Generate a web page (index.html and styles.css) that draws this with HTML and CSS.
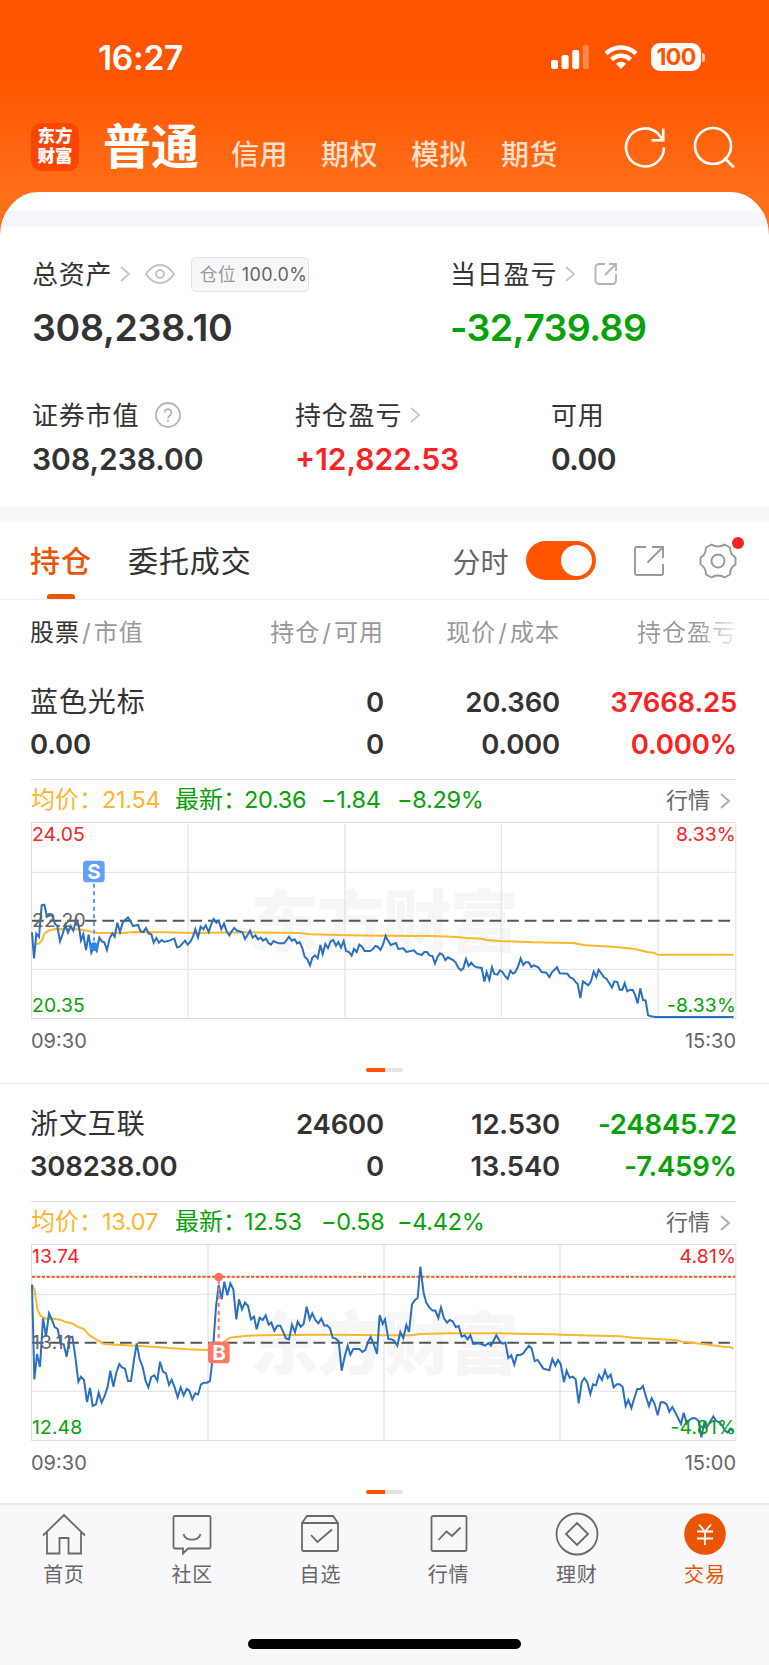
FILE: index.html
```html
<!DOCTYPE html>
<html lang="zh-CN">
<head>
    <meta charset="UTF-8">
    <meta name="viewport" content="width=device-width, initial-scale=1.0">
    <title>东方财富</title>
    <link rel="stylesheet" href="styles.css">
</head>
<body>
    <header>
        <div class="status">
            <span class="clock">16:27</span>
            <svg class="signal" width="40" height="26" viewBox="0 0 40 26">
                <rect x="0" y="16" width="7" height="9" rx="2" fill="#fff"/>
                <rect x="10.6" y="11" width="7" height="14" rx="2" fill="#fff"/>
                <rect x="21.2" y="6" width="7" height="19" rx="2" fill="#fff"/>
                <rect x="31.8" y="1" width="6" height="24" rx="2" fill="#fff" opacity=".3"/>
            </svg>
            <svg class="wifi" width="34" height="26" viewBox="0 0 34 26" fill="none" stroke="#fff" stroke-width="4.6">
                <path d="M2 9.6a21.5 21.5 0 0 1 30 0"/>
                <path d="M7.6 15.6a13.5 13.5 0 0 1 18.8 0"/>
                <path d="M17 25l-5-5.200a7 7 0 0 1 10 0z" fill="#fff" stroke="none"/>
            </svg>
            <span class="battery">100</span>
            <span class="battery-tip"></span>
        </div>
        <nav class="top-nav">
            <div class="logo"><span>东方</span><span>财富</span></div>
            <span class="nav-on">普通</span>
            <span class="nav-item">信用</span>
            <span class="nav-item">期权</span>
            <span class="nav-item">模拟</span>
            <span class="nav-item">期货</span>
            <svg class="refresh" width="42" height="42" viewBox="0 0 42 42" fill="none" stroke="#fff" stroke-width="2.6">
                <path d="M40 21.5A19 19 0 1 1 34 7.600L39 14"/>
                <path d="M39.2 2.500V14.300H27.500"/>
            </svg>
            <svg class="search" width="42" height="42" viewBox="0 0 42 42" fill="none" stroke="#fff" stroke-width="2.6" stroke-linecap="round">
                <circle cx="20" cy="20" r="18"/>
                <path d="M32 32.500L40 40.500"/>
            </svg>
        </nav>
    </header>

    <main>
        <div class="band band-top"></div>

        <section class="assets">
            <div class="asset-row">
                <div class="asset wide">
                    <div class="label"><span>总资产</span>
                        <svg class="arrow" width="12" height="18" viewBox="0 0 12 18"><path d="M2 2l8 7-8 7"/></svg>
                        <svg class="eye" width="30" height="20" viewBox="0 0 30 20" fill="none" stroke="#c4c4c4" stroke-width="2">
                            <path d="M1 10C5 4 10 1 15 1s10 3 14 9c-4 6-9 9-14 9S5 16 1 10z"/>
                            <circle cx="15" cy="10" r="4"/>
                        </svg>
                        <div class="chip">仓位 <b>100.0%</b></div>
                    </div>
                    <div class="value big">308,238.10</div>
                </div>
                <div class="asset">
                    <div class="label"><span>当日盈亏</span>
                        <svg class="arrow" width="12" height="18" viewBox="0 0 12 18"><path d="M2 2l8 7-8 7"/></svg>
                        <svg class="share" width="24" height="24" viewBox="0 0 24 24" fill="none" stroke="#b5b5b5" stroke-width="1.9">
                            <path d="M11 2H5a3.500 3.500 0 0 0-3.500 3.500v13A3.500 3.500 0 0 0 5 22h13.500a3.500 3.500 0 0 0 3.500-3.500V12"/>
                            <path d="M15 2h7v7M22 2L11 13"/>
                        </svg>
                    </div>
                    <div class="value big tight green">-32,739.89</div>
                </div>
            </div>
            <div class="asset-row second">
                <div class="asset c1">
                    <div class="label"><span>证券市值</span>
                        <svg class="help" width="26" height="26" viewBox="0 0 26 26" fill="none" stroke="#b5b5b5" stroke-width="1.8">
                            <circle cx="13" cy="13" r="12"/>
                            <path d="M9.600 10.500a3.400 3.400 0 1 1 5.200 2.900c-1.200.8-1.800 1.400-1.800 3M13 17.800v2"/>
                        </svg>
                    </div>
                    <div class="value">308,238.00</div>
                </div>
                <div class="asset c2">
                    <div class="label"><span>持仓盈亏</span>
                        <svg class="arrow" width="12" height="18" viewBox="0 0 12 18"><path d="M2 2l8 7-8 7"/></svg>
                    </div>
                    <div class="value red">+12,822.53</div>
                </div>
                <div class="asset">
                    <div class="label"><span>可用</span></div>
                    <div class="value tight">0.00</div>
                </div>
            </div>
        </section>

        <div class="band"></div>

        <div class="tabs">
            <span class="tab tab-on">持仓</span>
            <span class="tab">委托成交</span>
            <span class="fenshi">分时</span>
            <span class="switch"></span>
            <svg class="export" width="32" height="32" viewBox="0 0 32 32" fill="none" stroke="#999" stroke-width="1.9">
                <path d="M13 2H3.500A1.500 1.500 0 0 0 2 3.500v25A1.500 1.500 0 0 0 3.500 30h25a1.500 1.500 0 0 0 1.500-1.500V19"/>
                <path d="M19 2h11v11M30 2L14.500 17.500"/>
            </svg>
            <div class="gear">
                <svg width="38" height="38" viewBox="0 0 38 38" fill="none" stroke="#999" stroke-width="1.9" stroke-linejoin="round">
                    <path d="M12.500 2.500q2.500 2 6.500 2t6.500-2l5.500 3q.2 4 1.500 6.200t4 3.800v7q-2.700 1.500-4 3.800t-1.500 6.200l-5.500 3q-2.500-2-6.500-2t-6.500 2l-5.500-3q-.2-4-1.500-6.200t-4-3.800v-7q2.700-1.500 4-3.800t1.500-6.200z"/>
                    <circle cx="19" cy="19" r="6.500"/>
                </svg>
                <i></i>
            </div>
        </div>

        <div class="cols thead">
            <span><em>股票</em><s>/</s>市值</span>
            <span>持仓<s>/</s>可用</span>
            <span>现价<s>/</s>成本</span>
            <span class="fade">持仓盈亏</span>
        </div>

        <section class="stock">
            <div class="cols nums">
                <span class="name">蓝色光标</span><span>0</span><span>20.360</span><span class="red">37668.25</span>
                <span>0.00</span><span>0</span><span>0.000</span><span class="red">0.000%</span>
            </div>
            <div class="info">
                <span class="orange">均价：</span><b class="orange">21.54</b>
                <span class="green">最新：</span><b class="green">20.36</b>
                <b class="green">−1.84</b>
                <b class="green">−8.29%</b>
                <span class="more">行情</span>
                <svg class="arrow dark" width="12" height="18" viewBox="0 0 12 18"><path d="M2 2l8 7-8 7"/></svg>
            </div>
            <svg class="chart" width="706" height="199" viewBox="93 153 2118 597">
                <text class="mark" x="750" y="531" textLength="805">东方财富</text>
                <path class="grid" d="M95 307H2208M95 598H2208M564 162V742M1035 162V742M1504 162V742M1974 162V742"/>
                <rect class="frame" x="94.500" y="157.500" width="2113" height="588"/>
                <path class="base" d="M96 452H2206"/>
                <polyline class="avg" points="108,522 118,520 126,510 134,490 145,482 165,477 200,478 235,478 260,482 290,488 370,489 400,486 500,487 580,489 720,487 900,489 930,493 1040,496 1155,497 1290,498 1360,500 1400,504 1445,506 1460,510 1500,513 1600,517 1720,519 1755,526 1840,530 1905,537 1945,547 1962,548 1972,554 2201,554"/>
                <polyline class="price" points="96,487 102,565 109,491 117,501 125,406 133,404 141,440 149,436 157,436 165,462 172,468 180,514 188,492 196,464 204,488 212,468 220,482 229,448 236,465 243,511 250,493 258,540 266,494 274,548 282,530 290,543 298,503 306,515 313,517 321,540 329,505 337,490 344,500 352,458 360,486 368,458 376,450 384,442 391,453 399,468 414,465 422,484 430,486 438,474 446,490 454,493 461,518 469,504 477,518 485,510 493,516 508,512 523,506 531,532 539,530 555,512 563,524 571,515 579,500 586,478 594,502 602,470 610,478 617,466 626,486 634,462 641,447 649,458 656,452 664,477 672,461 680,484 688,496 695,484 703,474 711,482 727,486 735,507 743,494 750,482 758,503 766,496 774,508 782,503 789,512 798,506 806,520 813,524 821,513 836,520 852,520 860,510 867,500 875,512 884,508 891,520 899,516 907,534 914,560 922,568 930,586 937,563 945,556 953,565 961,525 968,552 976,522 984,534 992,514 1000,510 1008,527 1015,516 1023,533 1031,513 1038,543 1047,546 1055,557 1062,537 1070,546 1078,524 1086,530 1094,543 1110,543 1118,538 1126,528 1133,530 1141,540 1149,524 1157,498 1160,505 1172,525 1188,519 1195,537 1210,535 1219,546 1242,541 1250,550 1265,555 1273,546 1281,546 1289,557 1297,558 1305,580 1313,560 1320,550 1328,554 1336,570 1344,562 1360,571 1367,578 1375,594 1383,601 1390,595 1398,567 1406,588 1414,578 1422,588 1430,592 1445,594 1453,635 1460,606 1468,630 1476,592 1483,612 1492,614 1500,601 1507,606 1515,618 1523,627 1531,602 1539,611 1546,606 1554,590 1562,565 1570,585 1577,577 1586,577 1594,591 1601,586 1615,592 1625,606 1639,608 1648,621 1655,608 1671,592 1679,610 1702,611 1710,622 1718,625 1726,635 1733,642 1741,684 1749,634 1765,646 1773,634 1781,605 1789,621 1796,599 1812,622 1820,627 1828,640 1836,653 1843,634 1852,636 1859,659 1867,659 1874,640 1882,664 1890,659 1898,660 1905,674 1913,700 1921,655 1929,690 1937,691 1944,735 1952,739 1967,741 2201,741"/>
                <path class="sell-line" d="M282 341V520"/>
                <circle cx="282" cy="530" r="13" fill="#2f86f6"/>
                <rect x="249" y="272" width="65" height="65" rx="11" fill="#5f9fff"/>
                <text class="flag" x="282" y="327">S</text>
                <text class="axis up" x="96" y="212">24.05</text>
                <text class="axis mid" x="96" y="471">22.20</text>
                <text class="axis down" x="96" y="726">20.35</text>
                <text class="axis up end" x="2208" y="212">8.33%</text>
                <text class="axis down end" x="2208" y="726">-8.33%</text>
            </svg>
            <div class="times"><span>09:30</span><span>15:30</span></div>
            <div class="pager"></div>
        </section>

        <section class="stock">
            <div class="cols nums">
                <span class="name">浙文互联</span><span>24600</span><span>12.530</span><span class="green">-24845.72</span>
                <span>308238.00</span><span>0</span><span>13.540</span><span class="green">-7.459%</span>
            </div>
            <div class="info">
                <span class="orange">均价：</span><b class="orange">13.07</b>
                <span class="green">最新：</span><b class="green">12.53</b>
                <b class="green">−0.58</b>
                <b class="green">−4.42%</b>
                <span class="more">行情</span>
                <svg class="arrow dark" width="12" height="18" viewBox="0 0 12 18"><path d="M2 2l8 7-8 7"/></svg>
            </div>
            <svg class="chart" width="706" height="199" viewBox="93 159 2118 597">
                <text class="mark" x="750" y="537" textLength="805">东方财富</text>
                <path class="grid" d="M95 313H2208M95 604H2208M624 168V748M1152 168V748M1680 168V748"/>
                <rect class="frame" x="94.500" y="163.500" width="2113" height="588"/>
                <path class="base" d="M96 458H2206"/>
                <path class="cost" d="M96 260H2206"/>
                <polyline class="avg" points="96,284 104,300 112,358 122,378 137,386 160,386 180,389 200,397 217,400 235,411 252,417 268,436 290,449 310,461 350,464 420,468 510,474 560,478 620,480 640,480 665,460 690,443 740,437 830,435 1000,434 1155,436 1235,436 1260,432 1350,430 1500,430 1650,433 1735,436 1860,439 1900,443 2025,450 2050,456 2110,462 2170,470 2190,471 2201,476"/>
                <polyline class="price" points="96,284 103,568 111,492 120,530 129,385 138,440 147,370 156,390 164,411 173,417 182,461 191,463 200,500 209,442 217,440 226,500 235,575 243,560 252,570 261,636 270,594 278,648 288,643 296,608 305,638 314,618 323,590 331,542 340,590 349,548 358,522 366,532 375,536 384,573 393,573 402,510 410,460 419,508 428,531 437,573 445,592 454,561 463,556 472,572 480,515 489,545 498,550 507,585 515,569 524,592 533,622 542,592 551,616 560,597 568,602 577,628 586,610 594,614 603,583 612,578 621,578 630,573 636,520 641,450 648,350 656,285 665,328 673,275 682,316 691,280 700,298 709,388 717,328 726,358 735,338 744,348 753,388 762,380 770,418 779,383 788,390 797,376 806,404 814,398 823,422 832,407 841,407 850,427 858,445 867,448 876,404 885,427 893,395 902,410 911,402 920,350 929,388 937,370 946,390 955,400 964,386 973,407 981,406 990,415 998,443 1007,446 1016,454 1025,542 1034,500 1043,467 1051,494 1060,477 1078,477 1087,486 1096,480 1104,456 1112,441 1121,462 1131,492 1139,375 1148,402 1155,388 1165,447 1175,448 1183,453 1192,467 1201,426 1210,444 1219,405 1227,426 1236,343 1245,330 1253,324 1261,230 1271,310 1279,338 1288,352 1297,361 1306,362 1315,384 1323,352 1332,385 1341,398 1349,390 1358,394 1367,411 1376,408 1385,440 1394,436 1403,448 1411,436 1420,462 1438,460 1455,467 1465,459 1473,467 1489,436 1499,453 1508,461 1516,458 1525,504 1534,496 1543,524 1551,495 1560,495 1569,491 1587,467 1595,476 1604,513 1613,510 1630,536 1648,541 1657,507 1666,527 1674,510 1682,522 1692,576 1700,542 1709,563 1718,560 1727,568 1736,640 1745,577 1753,564 1762,577 1771,612 1779,583 1788,586 1797,555 1806,570 1815,541 1823,564 1832,554 1841,592 1850,583 1859,583 1868,591 1877,648 1885,630 1894,654 1903,624 1912,597 1921,597 1929,588 1938,620 1947,648 1955,624 1964,642 1973,676 1982,637 1991,637 2000,643 2008,665 2017,651 2026,668 2043,702 2051,668 2060,700 2069,689 2078,684 2087,685 2096,694 2104,742 2113,698 2121,711 2140,679 2149,693 2158,697 2166,706 2175,722 2183,728 2191,716 2201,726"/>
                <path class="buy-line" d="M656 270V455"/>
                <circle cx="656" cy="261" r="13" fill="#ff6f5e"/>
                <rect x="624" y="455" width="65" height="65" rx="11" fill="#ff7867"/>
                <text class="flag" x="657" y="510">B</text>
                <text class="axis up" x="96" y="218">13.74</text>
                <text class="axis mid" x="96" y="477">13.11</text>
                <text class="axis down" x="96" y="732">12.48</text>
                <text class="axis up end" x="2208" y="218">4.81%</text>
                <text class="axis down end" x="2208" y="732">-4.81%</text>
            </svg>
            <div class="times"><span>09:30</span><span>15:00</span></div>
            <div class="pager"></div>
        </section>
    </main>

    <footer>
        <div class="tabbar">
            <div class="item">
                <svg width="44" height="44" viewBox="0 0 44 44"><path d="M1 23.500L22 3l21 20.500M5 20v21.500h12.500V26h9v15.500H39V20"/></svg>
                首页
            </div>
            <div class="item">
                <svg width="44" height="44" viewBox="0 0 44 44"><path d="M5 4h34a1.500 1.500 0 0 1 1.500 1.500V35a1.500 1.500 0 0 1-1.500 1.500H18L13 41.500v-5H5A1.500 1.500 0 0 1 3.500 35V5.500A1.500 1.500 0 0 1 5 4z"/><path d="M13.500 22c2 7.500 15 7.500 17 0"/></svg>
                社区
            </div>
            <div class="item">
                <svg width="44" height="44" viewBox="0 0 44 44"><path d="M9 4h26l5 7v26.500a1.500 1.500 0 0 1-1.500 1.500h-33A1.500 1.500 0 0 1 4 37.500V11zM4 11h36M13 23l6.500 7L34 17.500"/></svg>
                自选
            </div>
            <div class="item">
                <svg width="44" height="44" viewBox="0 0 44 44"><path d="M6 4h32a1.500 1.500 0 0 1 1.500 1.500v32A1.500 1.500 0 0 1 38 39H6a1.500 1.500 0 0 1-1.500-1.500v-32A1.500 1.500 0 0 1 6 4z"/><path d="M11.500 28l8-8.500 5.500 4.500 8.500-8.500"/></svg>
                行情
            </div>
            <div class="item">
                <svg width="44" height="44" viewBox="0 0 44 44"><circle cx="22" cy="22" r="20.500"/><path d="M22 11l11 11-11 11-11-11z"/></svg>
                理财
            </div>
            <div class="item item-on">
                <svg width="44" height="44" viewBox="0 0 44 44"><circle class="dot" cx="22" cy="22" r="20.800"/><path class="yen" d="M16 12.500l6 7 6-7M22 19.500V33M14 19.500h16M14 26.500h16"/></svg>
                交易
            </div>
        </div>
        <div class="home-bar"></div>
    </footer>
</body>
</html>
```
FILE: styles.css
```css
*{
    margin: 0;
    padding: 0;
    box-sizing: border-box;
}
body{
    height: 1665px;
    overflow: hidden;
    display: flex;
    flex-direction: column;
    background: linear-gradient(#ff5500 0, #ff5500 75px, #ff6e19 192px, #ff6e19 260px);
    font-family: Inter, "Noto Sans CJK SC", sans-serif;
    color: #333;
}
svg{
    display: block;
    flex: none;
}
b{
    font-weight: normal;
}

/* header */
header{
    height: 192px;
    flex: none;
    color: #fff;
}
.status{
    height: 114px;
    padding-left: 98px;
    display: flex;
    align-items: center;
}
.clock{
    width: 453px;
    font-size: 33.5px;
    font-weight: 600;
    letter-spacing: -.3px;
    padding-top: 1px;
}
.wifi{
    margin-left: 13px;
}
.battery{
    width: 50px;
    height: 28px;
    margin-left: 13px;
    border-radius: 9px;
    background: #fff;
    color: #ff5500;
    font-size: 23px;
    font-weight: 700;
    letter-spacing: -.6px;
    line-height: 28px;
    text-align: center;
}
.battery-tip{
    width: 3px;
    height: 9px;
    margin-left: 1px;
    border-radius: 0 3px 3px 0;
    background: #ffc4a4;
}
.top-nav{
    height: 78px;
    padding-left: 31px;
    display: flex;
}
.logo{
    width: 48px;
    height: 48px;
    margin-top: 9px;
    padding-top: 3px;
    border-radius: 10px;
    background: #ff4400;
    font-size: 17.5px;
    font-weight: 900;
    line-height: 20px;
    display: flex;
    flex-direction: column;
    align-items: center;
}
.nav-on{
    width: 127px;
    margin-left: 24px;
    font-size: 48px;
    font-weight: 700;
    line-height: 65px;
}
.nav-item{
    width: 90px;
    margin-top: 16px;
    padding-left: 1px;
    font-size: 28px;
    font-weight: 500;
    letter-spacing: .6px;
    line-height: 50px;
    color: #ffe0cc;
}
.refresh{
    margin: 12px 0 0 34px;
}
.search{
    margin: 12px 0 0 27px;
}

/* white sheet */
main{
    height: 1311px;
    flex: none;
    padding-top: 19px;
    border-radius: 38px 38px 0 0 / 44px 44px 0 0;
    background: #fff;
    overflow: hidden;
}
.band{
    height: 16px;
    background: #f6f7fa;
}
.assets{
    height: 279px;
    padding: 26px 0 0 32px;
}
.asset-row{
    display: flex;
}
.second{
    margin-top: 35px;
}
.wide{
    width: 418px;
}
.c1{
    width: 263px;
}
.c2{
    width: 256px;
}
.label{
    height: 42px;
    display: flex;
    align-items: center;
    font-size: 26px;
    letter-spacing: .8px;
    white-space: nowrap;
}
.label span{
    padding-bottom: 3px;
}
.second .label{
    height: 41px;
}
.value{
    height: 47px;
    font-size: 30px;
    font-weight: 600;
    line-height: 48px;
}
.big{
    height: 64px;
    font-size: 37.5px;
    line-height: 66px;
    letter-spacing: -.3px;
}
.tight{
    letter-spacing: -.6px;
}
.red{
    color: #fa2222;
}
.green{
    color: #06a206;
}
.orange{
    color: #ffb42e;
}
.arrow{
    margin-left: 7px;
    fill: none;
    stroke: #c8c8c8;
    stroke-width: 1.9;
}
.eye{
    margin-left: 14px;
}
.chip{
    width: 118px;
    height: 35px;
    margin-left: 16px;
    padding-left: 7px;
    border: 1px solid #e2e3e8;
    border-radius: 5px;
    background: #f7f7fa;
    font-size: 18px;
    line-height: 33px;
    letter-spacing: .4px;
    color: #999;
}
.chip b{
    color: #666;
}
.share{
    margin-left: 18px;
}
.help{
    margin-left: 16px;
}

/* tabs */
.tabs{
    height: 78px;
    padding-left: 30px;
    border-bottom: 1px solid #f0f0f2;
    display: flex;
    align-items: center;
}
.tab{
    height: 77px;
    font-size: 30px;
    letter-spacing: .9px;
    line-height: 79px;
}
.tab-on{
    position: relative;
    width: 98px;
    color: #ea5504;
    font-weight: 500;
}
.tab-on::after{
    content: "";
    position: absolute;
    left: 17px;
    bottom: 0;
    width: 28px;
    height: 5px;
    border-radius: 3px 3px 1px 1px;
    background: #ea5504;
}
.fenshi{
    margin-left: 201px;
    width: 73px;
    font-size: 28px;
    color: #666;
}
.switch{
    width: 70px;
    height: 39px;
    padding: 4px;
    border-radius: 20px;
    background: #ff5500;
}
.switch::after{
    content: "";
    display: block;
    width: 31px;
    height: 31px;
    margin-left: 31px;
    border-radius: 50%;
    background: #fff;
}
.export{
    margin-left: 37px;
}
.gear{
    position: relative;
    margin-left: 34px;
}
.gear i{
    position: absolute;
    left: 33px;
    top: -5px;
    width: 12px;
    height: 12px;
    border-radius: 50%;
    background: #fa2222;
}

/* holdings */
.cols{
    display: grid;
    grid-template-columns: 200px 154px 176px 177px;
    padding-left: 30px;
}
.cols span{
    text-align: right;
    white-space: nowrap;
}
.cols span:nth-child(4n+1){
    text-align: left;
}
.thead{
    height: 62px;
    font-size: 24px;
    letter-spacing: 1px;
    line-height: 65px;
    color: #999;
}
.thead em{
    font-style: normal;
    color: #333;
}
.thead s{
    text-decoration: none;
    margin: 0 2px;
}
.thead .fade{
    background: linear-gradient(90deg, #999 78%, #fff 103%);
    background-clip: text;
    -webkit-background-clip: text;
    color: transparent;
}
.stock{
    height: 422px;
    padding-top: 19px;
    border-bottom: 1px solid #ededf0;
}
.nums{
    grid-auto-rows: 42px;
    font-size: 27.5px;
    font-weight: 600;
    line-height: 42px;
    letter-spacing: -.2px;
}
.nums .name{
    font-size: 28px;
    font-weight: 400;
    letter-spacing: .9px;
    line-height: 43px;
}
.info{
    height: 42px;
    margin: 14px 33px 0 31px;
    border-top: 1px solid #dedfe2;
    display: grid;
    grid-template-columns: 71px 73px 69px 77px 76px 1fr auto auto;
    align-items: baseline;
    font-size: 24px;
    line-height: 40px;
    white-space: nowrap;
}
.info b{
    font-size: 23.5px;
    letter-spacing: -.3px;
}
.more{
    font-size: 22px;
    color: #666;
}
.dark{
    align-self: center;
    margin: 0 5px 0 9px;
    stroke: #aaa;
}
.chart{
    margin-left: 31px;
}
.mark{
    font-family: "Noto Sans CJK SC", sans-serif;
    font-size: 205px;
    font-weight: 900;
    fill: #f6f6f6;
}
.grid, .frame{
    fill: none;
    stroke: #e2e5ee;
    stroke-width: 4;
}
.frame{
    stroke: #dcdfe5;
    stroke-width: 3;
}
.base{
    stroke: #555;
    stroke-width: 6;
    stroke-dasharray: 35 17.8;
}
.cost{
    stroke: #f25a14;
    stroke-width: 6;
    stroke-dasharray: 10 4.6;
}
.avg, .price{
    fill: none;
    stroke: #ffb62e;
    stroke-width: 6;
}
.price{
    stroke: #2a70c2;
}
.sell-line, .buy-line{
    stroke: #5f9fff;
    stroke-width: 6;
    stroke-dasharray: 12 11;
}
.buy-line{
    stroke: #ff6f5e;
}
.axis{
    font-size: 58px;
    letter-spacing: .4px;
}
.end{
    text-anchor: end;
}
.up{
    fill: #fa2222;
}
.mid{
    fill: #666;
}
.down{
    fill: #06a206;
}
.flag{
    font-size: 62px;
    font-weight: 700;
    fill: #fff;
    text-anchor: middle;
}
.times{
    height: 42px;
    padding: 0 33px 0 31px;
    display: flex;
    justify-content: space-between;
    font-size: 20px;
    line-height: 43px;
    color: #666;
}
.pager{
    width: 37px;
    height: 4px;
    margin: 6px auto 0;
    border-radius: 2px;
    background: linear-gradient(90deg, #ff5500 50%, #e3e3e3 50%);
}

/* bottom bar */
footer{
    height: 162px;
    flex: none;
    border-top: 2px solid #ebebed;
    background: #f8f8fa;
}
.tabbar{
    height: 134px;
    padding-top: 7px;
    display: grid;
    grid-template-columns: repeat(6, 1fr);
}
.item{
    display: flex;
    flex-direction: column;
    align-items: center;
    font-size: 20px;
    line-height: 39px;
    letter-spacing: .8px;
    color: #666;
}
.item svg{
    fill: none;
    stroke: #6a6a6a;
    stroke-width: 1.8;
}
.item-on{
    color: #ea5504;
}
.item .dot{
    fill: #ea5504;
    stroke: none;
}
.item .yen{
    stroke: #fff;
}
.home-bar{
    width: 273px;
    height: 10px;
    margin: 0 auto;
    border-radius: 5px;
    background: #000;
}
```
